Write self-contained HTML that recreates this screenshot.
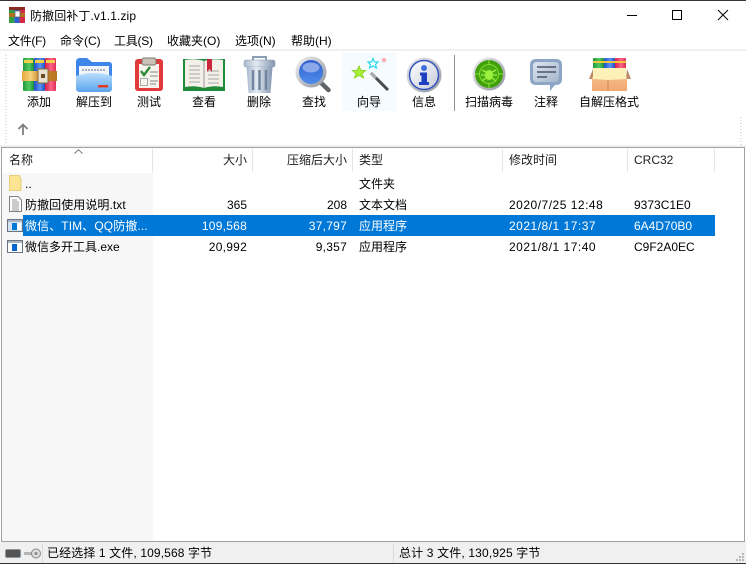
<!DOCTYPE html>
<html lang="zh"><head><meta charset="utf-8"><style>
html,body{margin:0;padding:0;width:746px;height:564px;overflow:hidden;background:#fff}
body{position:relative;font:12px/16px "Liberation Sans","Noto Sans CJK SC",sans-serif;color:#000}
div{position:absolute;white-space:nowrap}
svg{position:absolute;overflow:visible}
.i{filter:blur(.3px)}
.c{text-align:center;transform:translateX(-50%)}
.r{text-align:right}
.g{color:#1c1c1c}
.w{color:#fff}
.d{letter-spacing:.5px}
.n{letter-spacing:.25px}
</style></head><body>
<div style="left:0;top:0;width:746px;height:1px;background:#3a3533"></div>
<div style="left:0;top:563px;width:746px;height:1px;background:#333"></div>

<svg class="i" style="left:9px;top:7px" width="16" height="16" viewBox="0 0 16 16"><rect width="5.300" height="16" fill="#2f9e44"/><rect x="5.300" width="5.300" height="16" fill="#2a5fd0"/><rect x="10.600" width="5.400" height="16" fill="#d8284a"/><rect y="0" width="16" height="3" fill="#8a2a20"/><rect y="6" width="16" height="4" fill="#b5701c"/><rect x="6" y="4" width="5" height="6" fill="#fff" stroke="#555" stroke-width=".7"/></svg>
<div style="left:30px;top:8px;letter-spacing:.1px">防撤回补丁.v1.1.zip</div>
<svg style="left:620px;top:8px" width="110" height="16" viewBox="0 0 110 16" fill="none" stroke="#000"><path d="M7 7.500H17"/><rect x="52.500" y="2.500" width="9" height="9"/><path d="M98 2L108 12M108 2L98 12"/></svg>

<div style="left:8px;top:33px;letter-spacing:-.3px">文件(F)</div>
<div style="left:60px;top:33px">命令(C)</div>
<div style="left:114px;top:33px;letter-spacing:-.25px">工具(S)</div>
<div style="left:167px;top:33px">收藏夹(O)</div>
<div style="left:235px;top:33px">选项(N)</div>
<div style="left:291px;top:33px">帮助(H)</div>
<div style="left:0;top:49px;width:746px;height:2px;background:#f0f0f0"></div>

<svg style="left:5px;top:55px" width="2" height="88"><path d="M1 0V88" stroke="#c4c4c4" stroke-dasharray="1 2"/></svg>
<svg style="left:740px;top:117px" width="3" height="28"><path d="M1 0V28" stroke="#c4c4c4" stroke-dasharray="1 2"/></svg>

<svg width="0" height="0" style="left:0;top:0"><defs>
<linearGradient id="gg" x1="0" x2="1" y1="0" y2="0"><stop offset="0" stop-color="#1f9a3e"/><stop offset=".55" stop-color="#52c85f"/><stop offset="1" stop-color="#1f8f3c"/></linearGradient>
<linearGradient id="gb" x1="0" x2="1" y1="0" y2="0"><stop offset="0" stop-color="#1f4fc8"/><stop offset=".55" stop-color="#5a92f2"/><stop offset="1" stop-color="#2250c0"/></linearGradient>
<linearGradient id="gr" x1="0" x2="1" y1="0" y2="0"><stop offset="0" stop-color="#d81f44"/><stop offset=".55" stop-color="#f8658a"/><stop offset="1" stop-color="#de2c54"/></linearGradient>
<linearGradient id="belt" x1="0" x2="1" y1="0" y2="0"><stop offset="0" stop-color="#e7a83a"/><stop offset=".25" stop-color="#f6d27e"/><stop offset=".5" stop-color="#c98a2a"/><stop offset="1" stop-color="#b8741f"/></linearGradient>
<linearGradient id="fold" x1="0" x2="0" y1="0" y2="1"><stop offset="0" stop-color="#b9defb"/><stop offset="1" stop-color="#5aa4ee"/></linearGradient>
<linearGradient id="can" x1="0" x2="1" y1="0" y2="0"><stop offset="0" stop-color="#a9b9cd"/><stop offset=".4" stop-color="#e3eaf2"/><stop offset="1" stop-color="#8396b0"/></linearGradient>
<linearGradient id="lens" x1="0" x2="0" y1="0" y2="1"><stop offset="0" stop-color="#2f5fd0"/><stop offset="1" stop-color="#4f8ee8"/></linearGradient>
<linearGradient id="ring" x1="0" x2="1" y1="0" y2="1"><stop offset="0" stop-color="#f2f2f4"/><stop offset="1" stop-color="#8e939c"/></linearGradient>
<linearGradient id="info" x1="0" x2="1" y1="0" y2="1"><stop offset="0" stop-color="#fff"/><stop offset="1" stop-color="#c5cbd8"/></linearGradient>
<linearGradient id="bub" x1="0" x2="1" y1="0" y2="1"><stop offset="0" stop-color="#dde5f0"/><stop offset="1" stop-color="#a4b5cc"/></linearGradient>
<linearGradient id="box" x1="0" x2="0" y1="0" y2="1"><stop offset="0" stop-color="#f5ba88"/><stop offset="1" stop-color="#f0a870"/></linearGradient>
<radialGradient id="bug"><stop offset="0" stop-color="#52b818"/><stop offset="1" stop-color="#3f9c0c"/></radialGradient>
</defs></svg>

<!-- Add -->
<svg class="i" style="left:23px;top:58px" width="34" height="34" viewBox="0 0 34 34"><rect width="11" height="33" rx="1" fill="url(#gg)"/><rect x="11" width="11" height="33" rx="1" fill="url(#gb)"/><rect x="22" width="11" height="33" rx="1" fill="url(#gr)"/><rect x="1" y="2" width="9" height="3" fill="#f2d04a"/><rect x="12" y="2" width="9" height="3" fill="#f2d04a"/><rect x="23" y="2" width="9" height="3" fill="#f2d04a"/><rect x="-1" y="13" width="35" height="10" fill="url(#belt)"/><rect x="15" y="11" width="10" height="14" fill="#e9e2d2" stroke="#8a6a3a"/><rect x="18" y="16" width="4" height="4" fill="#6a4a24"/></svg>
<div class="c" style="left:39px;top:94px">添加</div>
<!-- Extract -->
<svg class="i" style="left:76px;top:58px" width="36" height="34" viewBox="0 0 36 34"><path d="M0 4Q0 0 4 0H11L16 4H33Q36 4 36 7V30Q36 34 32 34H4Q0 34 0 30Z" fill="#3f86ea"/><rect x="3" y="8" width="30" height="11" fill="#f1f4f8"/><path d="M6 12H30" stroke="#a8b2be" stroke-width="2" stroke-dasharray="2 1"/><path d="M0 18Q18 12 36 18V30Q36 34 32 34H4Q0 34 0 30Z" fill="url(#fold)"/><rect x="22" y="27" width="10" height="2.500" fill="#e33b2a"/></svg>
<div class="c" style="left:94px;top:94px">解压到</div>
<!-- Test -->
<svg class="i" style="left:135px;top:58px" width="28" height="33" viewBox="0 0 28 33"><rect x="0" y="1" width="28" height="32" rx="3" fill="#e23a3a"/><rect x="4" y="6" width="20" height="24" fill="#f6f3ec"/><rect x="7" y="0" width="14" height="7" rx="2" fill="#c9c2b6" stroke="#7c756c"/><path d="M6 13L9 17L15 9" fill="none" stroke="#2f8a3a" stroke-width="2.400"/><rect x="5.500" y="20.500" width="7" height="7" fill="none" stroke="#aaa"/><path d="M15 14H23M15 18H23M15 23H23M15 26H21" stroke="#888"/></svg>
<div class="c" style="left:149px;top:94px">测试</div>
<!-- View -->
<svg class="i" style="left:183px;top:58px" width="42" height="33" viewBox="0 0 42 33"><path d="M0 1H42V33H0Z" fill="#1f8a3a"/><path d="M2 2Q12 0 21 3Q30 0 40 2V29Q30 27 21 30Q12 27 2 29Z" fill="#f2f0e8"/><path d="M21 3V30" stroke="#999"/><path d="M6 8H17M6 12H17M6 16H17M6 20H17M6 24H17M25 13H36M25 17H36M25 21H36M25 25H36" stroke="#b5b5b0" stroke-width="1.200"/><path d="M24 1H29V14L26.500 11L24 14Z" fill="#c8283a"/></svg>
<div class="c" style="left:204px;top:94px">查看</div>
<!-- Delete -->
<svg class="i" style="left:244px;top:55px" width="31" height="38" viewBox="0 0 31 38"><path d="M9 6V2H22V6" fill="none" stroke="#8d9fb5" stroke-width="2"/><rect x="0" y="5" width="31" height="7" rx="2" fill="url(#can)" stroke="#8396b0" stroke-width=".5"/><path d="M2.500 12H28.500L26.500 38H4.500Z" fill="url(#can)"/><path d="M9 15V35M15.500 15V35M22 15V35" stroke="#71859e" stroke-width="2.500"/></svg>
<div class="c" style="left:259px;top:94px">删除</div>
<!-- Find -->
<svg class="i" style="left:295px;top:56px" width="37" height="37" viewBox="0 0 37 37"><path d="M23 24L33.500 34" stroke="#5f6368" stroke-width="4.500" stroke-linecap="round"/><circle cx="16" cy="16" r="15.500" fill="url(#ring)"/><circle cx="16" cy="16" r="12" fill="url(#lens)"/><ellipse cx="16" cy="11.500" rx="8.500" ry="5" fill="#8aa8ea"/></svg>
<div class="c" style="left:314px;top:94px">查找</div>
<!-- Wizard -->
<div style="left:342px;top:53px;width:55px;height:58px;background:#f6fbff"></div>
<svg class="i" style="left:351px;top:57px" width="38" height="36" viewBox="0 0 38 36"><path d="M20 16L37 33" stroke="#4a4a4a" stroke-width="3"/><path d="M20 16L25 21" stroke="#aaa" stroke-width="3"/><path d="M8 9L10 13.500H14.500L11 16.500L12.500 21L8 18.500L3.500 21L5 16.500L1.500 13.500H6Z" fill="#a7f03a" stroke="#8fd42a"/><path d="M14 1.500L15.500 5H19L16.500 7.500L17.500 11L14 9L10.500 11L11.500 7.500L9 5H12.500Z" fill="#fff" stroke="#27d8ee" stroke-width="1.200" transform="translate(8,0)"/><path d="M33 0L34 2H36L34.500 3.500L35 6L33 4.500L31 6L31.500 3.500L30 2H32Z" fill="#f7a8ae"/></svg>
<div class="c" style="left:369px;top:94px">向导</div>
<!-- Info -->
<svg class="i" style="left:406px;top:57px" width="36" height="36" viewBox="0 0 36 36"><circle cx="18" cy="18" r="17.500" fill="url(#ring)"/><circle cx="18" cy="18" r="14.500" fill="url(#info)" stroke="#3253c0" stroke-width="1.500"/><circle cx="18" cy="11" r="3" fill="#3f6fe0"/><path d="M14 15.500H21V25H23V28H13V25H15.500V18.500H14Z" fill="#1c3ec0"/></svg>
<div class="c" style="left:424px;top:94px">信息</div>
<div style="left:454px;top:55px;width:1px;height:56px;background:#909090"></div>
<!-- Scan -->
<svg class="i" style="left:472px;top:57px" width="34" height="34" viewBox="0 0 34 34"><circle cx="17" cy="17" r="16.500" fill="url(#ring)"/><circle cx="17" cy="17" r="14" fill="url(#bug)"/><circle cx="17" cy="17" r="9.500" fill="none" stroke="#7bdc2c"/><path d="M17 3V8M17 26V31M3 17H8M26 17H31" stroke="#8ee63a"/><ellipse cx="17" cy="18" rx="4" ry="5" fill="#9cf03e"/><path d="M10 13L14 15M24 13L20 15M9 18H13M25 18H21M10 24L14 21M24 24L20 21" stroke="#9cf03e" stroke-width="1.300"/></svg>
<div class="c" style="left:489px;top:94px">扫描病毒</div>
<!-- Comment -->
<svg class="i" style="left:530px;top:59px" width="32" height="33" viewBox="0 0 32 33"><path d="M6 0H26Q32 0 32 6V20Q32 26 26 26H25L20 32V26H6Q0 26 0 20V6Q0 0 6 0Z" fill="#8ea6c6"/><path d="M7 3H25Q29 3 29 7V19Q29 23 25 23H7Q3 23 3 19V7Q3 3 7 3Z" fill="url(#bub)"/><path d="M7 8H26M7 13H26M7 18H17" stroke="#4a5668" stroke-width="1.500"/></svg>
<div class="c" style="left:546px;top:94px">注释</div>
<!-- SFX -->
<svg class="i" style="left:588px;top:57px" width="44" height="35" viewBox="0 0 44 35"><path d="M5 12L1 22H6ZM39 12L43 22H38Z" fill="#b98a66"/><rect x="5" y="1" width="11" height="14" rx="1" fill="url(#gg)"/><rect x="16" y="1" width="11" height="14" rx="1" fill="url(#gb)"/><rect x="27" y="1" width="11" height="14" rx="1" fill="url(#gr)"/><rect x="5" y="4" width="33" height="2" fill="#f2c53a"/><rect x="4" y="20" width="35" height="14" fill="url(#box)"/><path d="M20 20V34" stroke="#c88a58"/><path d="M5 11H38V22L20 23L5 22Z" fill="#fdf0b8"/></svg>
<div class="c" style="left:609px;top:94px">自解压格式</div>

<svg style="left:17px;top:123px" width="12" height="12" viewBox="0 0 12 12" fill="none" stroke="#7f7f7f" stroke-width="1.800"><path d="M6 12V1.500M1.500 6L6 1.500L10.500 6"/></svg>
<div style="left:0;top:145px;width:746px;height:2px;background:#f0f0f0"></div>

<!-- List -->
<div style="left:1px;top:147px;width:744px;height:1px;background:#a0a0a0"></div>
<div style="left:1px;top:147px;width:1px;height:395px;background:#a0a0a0"></div>
<div style="left:744px;top:147px;width:1px;height:395px;background:#a0a0a0"></div>
<div style="left:1px;top:541px;width:744px;height:1px;background:#a0a0a0"></div>
<div style="left:2px;top:173px;width:151px;height:368px;background:#f7f7f7"></div>
<div style="left:152px;top:149px;width:1px;height:23px;background:#e5e5e5"></div>
<div style="left:252px;top:149px;width:1px;height:23px;background:#e5e5e5"></div>
<div style="left:352px;top:149px;width:1px;height:23px;background:#e5e5e5"></div>
<div style="left:502px;top:149px;width:1px;height:23px;background:#e5e5e5"></div>
<div style="left:627px;top:149px;width:1px;height:23px;background:#e5e5e5"></div>
<div style="left:714px;top:149px;width:1px;height:23px;background:#e5e5e5"></div>
<svg style="left:74px;top:149px" width="9" height="5" fill="none" stroke="#777"><path d="M.5 4.500L4.500 .8L8.500 4.500"/></svg>

<div class="g" style="left:9px;top:152px">名称</div>
<div class="r g" style="right:499px;top:152px">大小</div>
<div class="r g" style="right:399px;top:152px">压缩后大小</div>
<div class="g" style="left:359px;top:152px">类型</div>
<div class="g" style="left:509px;top:152px">修改时间</div>
<div class="g" style="left:634px;top:152px">CRC32</div>

<svg style="left:9px;top:175px" width="13" height="16" viewBox="0 0 13 16"><path d="M.5.500H9.500Q11 .5 11 2V4H12V15.500H.5Z" fill="#fce592" stroke="#e8cd7a"/></svg>
<div style="left:25px;top:176px">..</div>
<div style="left:359px;top:176px">文件夹</div>

<svg style="left:9px;top:196px" width="13" height="16" viewBox="0 0 13 16" fill="#fff" stroke="#808080"><path d="M.5.500H9L12.500 4V15.500H.5Z"/><path d="M3 4H8M3 6H10M3 8H10M3 10H10M3 12H10M3 14H10" stroke="#999"/></svg>
<div style="left:25px;top:197px;letter-spacing:.07px">防撤回使用说明.txt</div>
<div class="r" style="right:499px;top:197px">365</div>
<div class="r" style="right:399px;top:197px">208</div>
<div style="left:359px;top:197px">文本文档</div>
<div class="d" style="left:509px;top:197px">2020/7/25 12:48</div>
<div style="left:634px;top:197px">9373C1E0</div>

<div style="left:23px;top:215px;width:692px;height:21px;background:#0078d7"></div>
<svg style="left:7px;top:219px" width="16" height="13" viewBox="0 0 16 13"><rect x=".5" y=".5" width="15" height="12" fill="#d5e2ef" stroke="#6a7480"/><rect x="1" y="1" width="14" height="2" fill="#a8b8c8"/><rect x="5" y="4" width="5" height="7" fill="#0078d7"/><rect x="10" y="4" width="4" height="7" fill="#fff"/></svg>
<div class="w" style="left:25px;top:218px;width:126px;overflow:hidden;letter-spacing:.1px">微信、TIM、QQ防撤...</div>
<div class="r w n" style="right:499px;top:218px">109,568</div>
<div class="r w n" style="right:399px;top:218px">37,797</div>
<div class="w" style="left:359px;top:218px">应用程序</div>
<div class="w d" style="left:509px;top:218px">2021/8/1 17:37</div>
<div class="w" style="left:634px;top:218px">6A4D70B0</div>

<svg style="left:7px;top:240px" width="16" height="13" viewBox="0 0 16 13"><rect x=".5" y=".5" width="15" height="12" fill="#fff" stroke="#6a7480"/><rect x="1" y="1" width="14" height="2" fill="#a8b4c0"/><rect x="5" y="4" width="5" height="7" fill="#0a64d0"/></svg>
<div style="left:25px;top:239px">微信多开工具.exe</div>
<div class="r n" style="right:499px;top:239px">20,992</div>
<div class="r n" style="right:399px;top:239px">9,357</div>
<div style="left:359px;top:239px">应用程序</div>
<div class="d" style="left:509px;top:239px">2021/8/1 17:40</div>
<div style="left:634px;top:239px">C9F2A0EC</div>

<!-- Status -->
<div style="left:0;top:542px;width:746px;height:21px;background:#f0f0f0"></div>
<svg class="i" style="left:5px;top:548px" width="36" height="11" viewBox="0 0 36 11"><rect x=".5" y="1.500" width="15" height="8" rx="1.500" fill="#555" stroke="#8a949c"/><path d="M19 4H28V7H19Z" fill="#b5b5b5"/><circle cx="31" cy="5.500" r="4.500" fill="#ddd" stroke="#888"/><circle cx="31" cy="5.500" r="1.500" fill="#888"/></svg>
<div style="left:42px;top:543px;width:1px;height:20px;background:#dcdcdc"></div>
<div style="left:47px;top:545px;letter-spacing:.12px">已经选择 1 文件, 109,568 字节</div>
<div style="left:393px;top:543px;width:1px;height:20px;background:#dcdcdc"></div>
<div style="left:399px;top:545px;letter-spacing:.15px">总计 3 文件, 130,925 字节</div>
<svg style="left:736px;top:553px" width="8" height="8" fill="#b5b5b5"><rect x="6" y="0" width="2" height="2"/><rect x="3" y="3" width="2" height="2"/><rect x="6" y="3" width="2" height="2"/><rect x="0" y="6" width="2" height="2"/><rect x="3" y="6" width="2" height="2"/><rect x="6" y="6" width="2" height="2"/></svg>
</body></html>
